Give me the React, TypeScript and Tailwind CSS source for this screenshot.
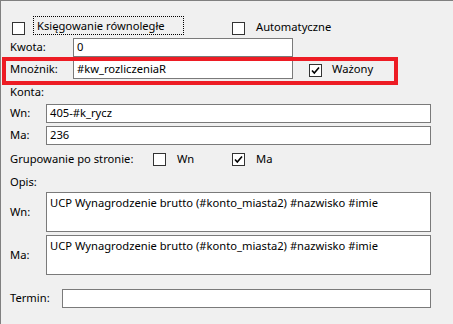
import { ReactNode } from 'react'

const Check = ({ checked }: { checked?: boolean }) => (
  <span className="inline-flex h-[13px] w-[13px] shrink-0 items-center justify-center border border-[#333333] bg-white">
    {checked && (
      <svg width="9" height="9" viewBox="0 0 9 9">
        <path d="M1 4.5 L3.3 7 L8 1.5" fill="none" stroke="#000" strokeWidth="1.6" />
      </svg>
    )}
  </span>
)

const Field = ({ value, className = '' }: { value?: string; className?: string }) => (
  <div className={`flex h-[19px] items-center border border-[#7a7a7a] bg-white pl-[3px] ${className}`}>
    {value}
  </div>
)

const Area = ({ value }: { value: string }) => (
  <div className="h-[40px] flex-1 border border-[#7a7a7a] bg-white pl-[3px] pt-[2px] leading-[15px]">
    {value}
  </div>
)

const Row = ({ label, width, children, className = '' }: { label: string; width: string; children: ReactNode; className?: string }) => (
  <div className={`flex items-center ${className}`}>
    <span className={`${width} shrink-0`}>{label}</span>
    {children}
  </div>
)

export default function App() {
  const opis = 'UCP Wynagrodzenie brutto (#konto_miasta2) #nazwisko #imie'
  return (
    <div
      className="relative h-[324px] w-[453px] overflow-hidden border-l border-t border-[#808080] bg-[#f0f0f0] text-[11.2px] text-black"
      style={{ fontFamily: '"Noto Sans", sans-serif' }}
    >
      <div className="flex flex-col pl-[9px] pr-[22px] pt-[15px]">
        <div className="flex h-[19px] items-center">
          <span className="ml-[2px] mt-[5px] flex"><Check /></span>
          <span className="ml-[8px] flex h-[19px] w-[151px] items-center border border-dotted border-black pl-[3px] pt-[2px]">
            Księgowanie równoległe
          </span>
          <span className="ml-[48px] mt-[5px] flex"><Check /></span>
          <span className="ml-[11px] mt-[3px]">Automatyczne</span>
        </div>

        <Row label="Kwota:" width="w-[63px]" className="mt-[3px]">
          <Field value="0" className="w-[220px]" />
        </Row>
        <Row label="Mnożnik:" width="w-[63px]" className="mt-[3px]">
          <Field value="#kw_rozliczeniaR" className="w-[220px]" />
          <span className="ml-[16px] mt-[2px] flex"><Check checked /></span>
          <span className="ml-[10px]">Ważony</span>
        </Row>

        <div className="mt-[4px] h-[18px] leading-[18px]">Konta:</div>
        <Row label="Wn:" width="w-[36px]" className="mt-[3px]">
          <Field value="405-#k_rycz" className="flex-1" />
        </Row>
        <Row label="Ma:" width="w-[36px]" className="mt-[3px]">
          <Field value="236" className="flex-1" />
        </Row>

        <div className="mt-[5px] flex h-[19px] items-center">
          <span className="w-[143px] shrink-0">Grupowanie po stronie:</span>
          <Check />
          <span className="ml-[11px] w-[55px]">Wn</span>
          <Check checked />
          <span className="ml-[11px]">Ma</span>
        </div>

        <div className="mt-[3px] h-[19px] leading-[19px]">Opis:</div>
        <Row label="Wn:" width="w-[36px]" className="mt-[1px]">
          <Area value={opis} />
        </Row>
        <Row label="Ma:" width="w-[36px]" className="mt-[3px]">
          <Area value={opis} />
        </Row>

        <Row label="Termin:" width="w-[52px]" className="mt-[14px]">
          <Field className="flex-1" />
        </Row>
      </div>

      <div className="absolute left-[1px] top-[56px] h-[28px] w-[396px] border-4 border-[#ed1c24]" />
    </div>
  )
}
